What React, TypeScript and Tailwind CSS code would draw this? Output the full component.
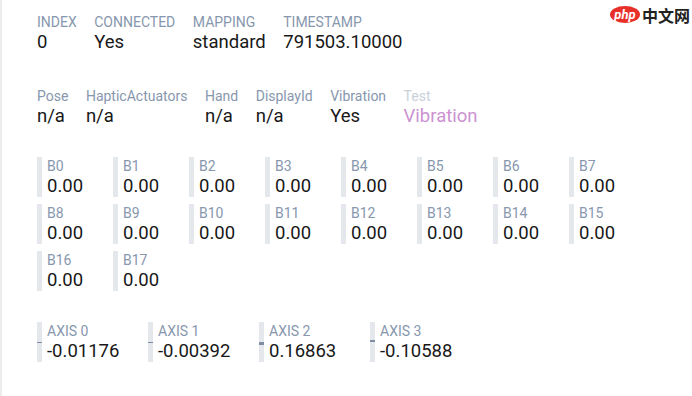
import React from "react"

interface Field {
  label: string
  value: string
  muted?: boolean
}

const info: Field[] = [
  { label: "INDEX", value: "0" },
  { label: "CONNECTED", value: "Yes" },
  { label: "MAPPING", value: "standard" },
  { label: "TIMESTAMP", value: "791503.10000" },
]

const extras: Field[] = [
  { label: "Pose", value: "n/a" },
  { label: "HapticActuators", value: "n/a" },
  { label: "Hand", value: "n/a" },
  { label: "DisplayId", value: "n/a" },
  { label: "Vibration", value: "Yes" },
  { label: "Test", value: "Vibration", muted: true },
]

const buttons = Array.from({ length: 18 }, (_, i) => ({ label: `B${i}`, value: 0 }))

const axes = [-0.01176, -0.00392, 0.16863, -0.10588]

function FieldRow({ fields }: { fields: Field[] }) {
  return (
    <div className="flex gap-x-[17.5px]">
      {fields.map((f) => (
        <div key={f.label} className="flex flex-col">
          <span className={`text-[14px] leading-[18px] ${f.muted ? "text-[#c9d0da]" : "text-[#8797ad]"}`}>
            {f.label}
          </span>
          <span className={`text-[18.5px] leading-[22px] ${f.muted ? "text-[#cc92d2]" : "text-[#181818]"}`}>
            {f.value}
          </span>
        </div>
      ))}
    </div>
  )
}

function Gauge({ label, value, axis }: { label: string; value: string; axis?: number }) {
  const h = axis !== undefined ? Math.abs(axis) * 20 : 0
  return (
    <div className="flex h-[40px]">
      <div className="relative w-[5px] bg-[#e4e7ec]">
        {axis !== undefined && (
          <div
            className="absolute left-0 w-[5px] bg-[#7f8da1]"
            style={{ top: axis < 0 ? 20 - h : 20, height: h }}
          />
        )}
      </div>
      <div className="flex flex-col pl-[5px]">
        <span className="text-[14px] leading-[18px] text-[#8797ad]">{label}</span>
        <span className="text-[18.5px] leading-[22px] text-[#181818]">{value}</span>
      </div>
    </div>
  )
}

export default function App() {
  return (
    <div
      className="relative min-h-screen border-l-2 border-[#ececec] bg-white pl-[35px] pt-[13px]"
      style={{ fontFamily: "Roboto, 'Noto Sans', sans-serif" }}
    >
      <FieldRow fields={info} />

      <div className="mt-[34px]">
        <FieldRow fields={extras} />
      </div>

      <div className="mt-[30px] grid grid-cols-[repeat(8,76px)] gap-y-[7px]">
        {buttons.map((b) => (
          <Gauge key={b.label} label={b.label} value={b.value.toFixed(2)} />
        ))}
      </div>

      <div className="mt-[31px] grid grid-cols-[repeat(4,111px)]">
        {axes.map((a, i) => (
          <Gauge key={i} label={`AXIS ${i}`} value={a.toFixed(5)} axis={a} />
        ))}
      </div>

      {/* watermark */}
      <div className="absolute right-[2px] top-[6px] flex items-center gap-[2px]">
        <div className="flex h-[17px] w-[30px] items-center justify-center rounded-[50%] bg-[#e8302a]">
          <span className="text-[13px] font-bold italic leading-none text-white">php</span>
        </div>
        <span
          className="text-[16px] font-bold leading-none text-[#222]"
          style={{ fontFamily: "'Noto Sans CJK SC', sans-serif" }}
        >
          中文网
        </span>
      </div>
    </div>
  )
}
